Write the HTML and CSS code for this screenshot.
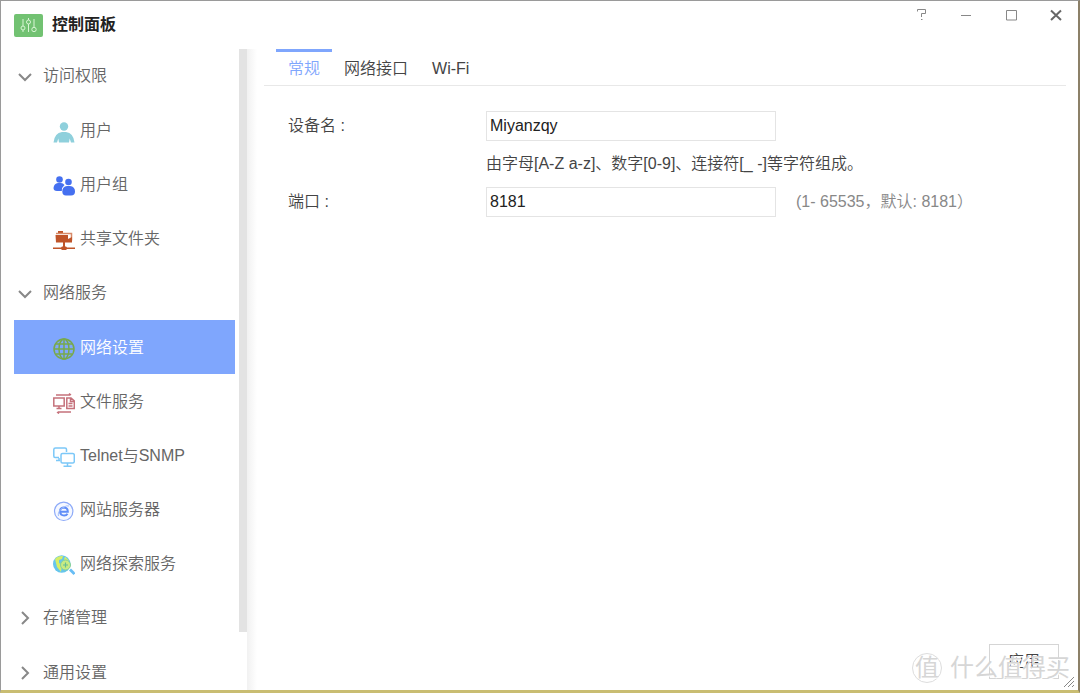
FILE: index.html
```html
<!DOCTYPE html>
<html lang="zh-CN">
<head>
<meta charset="utf-8">
<meta name="viewport" content="width=device-width, initial-scale=1">
<title>控制面板</title>
<link rel="stylesheet" href="styles.css">
</head>
<body>
<div class="window">
  <header class="titlebar">
    <svg class="app-icon" viewBox="0 0 29 23" aria-hidden="true"><rect width="29" height="23" rx="2" fill="#72c272"/><g fill="none" stroke="#d8f5d4"><path d="M9 5v7M9 16v2M14.500 4v2M14.500 10v8M20 5v8"/><circle cx="9" cy="14" r="2"/><circle cx="14.500" cy="8" r="2"/><circle cx="20" cy="15.500" r="2.200"/></g></svg>
    <h1 class="title">控制面板</h1>
    <div class="window-controls">
      <button class="control" type="button" aria-label="帮助"><svg viewBox="0 0 14 14"><path d="M3.500 3.500v-2h8v4H7.500V9M7 11.500h1.500" /></svg></button>
      <button class="control" type="button" aria-label="最小化"><svg viewBox="0 0 14 14"><path d="M2 7.500h10"/></svg></button>
      <button class="control" type="button" aria-label="最大化"><svg viewBox="0 0 14 14"><path d="M2.500 2.500h10v9.500h-10z"/></svg></button>
      <button class="control close" type="button" aria-label="关闭"><svg viewBox="0 0 14 14"><path d="M2 2.500l10 9.500M12 2.500L2 12"/></svg></button>
    </div>
  </header>

  <div class="body">
    <aside class="sidebar">
      <nav class="menu">
        <section class="group">
          <button class="group-name" type="button"><svg class="chevron" viewBox="0 0 16 16"><path d="M2 6l6 6 6-6"/></svg>访问权限</button>
          <a class="item" href="#users"><svg class="icon" viewBox="0 0 22 22"><g fill="#8fd0dc"><circle cx="11" cy="5.500" r="4.200"/><path d="M0.500 21.500Q1.500 12 9 11h4q7.500 1 8.500 10.500h-3.500l-1.300-4-.7 4H6l-.7-4-1.300 4z"/></g></svg>用户</a>
          <a class="item" href="#groups"><svg class="icon" viewBox="0 0 22 22"><g fill="#4570f0"><circle cx="6.500" cy="4.500" r="3.300"/><path d="M0.500 13Q1 8.500 5 8h3q2 0 3.500 2-2.700 2-2.700 6H4q-3.500 0-3.500-3z"/><circle cx="15.500" cy="7" r="3.300"/><path d="M9.300 16.500q0-5 4.700-5.500h3q5 .5 5 5.500 0 4-4 4h-5q-3.700 0-3.700-4z"/></g></svg>用户组</a>
          <a class="item" href="#shares"><svg class="icon" viewBox="0 0 22 22"><path d="M5 2h5v2H5z" fill="#bf5429"/><path d="M3 4.500h15.500v7" fill="none" stroke="#d88a69" stroke-width="1.500"/><path d="M2.500 6H15v4l2-1 2-1v5.500H3zM10 13h2v5h-2zM0 18.500h8l1-1h4l1 1h8V20h-8l-1 1H9l-1-1H0z" fill="#bf5429"/></svg>共享文件夹</a>
        </section>
        <section class="group">
          <button class="group-name" type="button"><svg class="chevron" viewBox="0 0 16 16"><path d="M2 6l6 6 6-6"/></svg>网络服务</button>
          <a class="item active" href="#network" aria-current="page"><svg class="icon" viewBox="0 0 22 22"><g fill="none" stroke="#78a94c" stroke-width="1.500"><circle cx="11" cy="11" r="10"/><ellipse cx="11" cy="11" rx="5" ry="10"/><path d="M11 1v20M1 11h20M3 6h16M3 16h16"/></g></svg>网络设置</a>
          <a class="item" href="#files"><svg class="icon" viewBox="0 0 22 22"><g fill="none" stroke="#c5717b" stroke-width="1.500"><path d="M3 3h14M16 1.500l2 1.500M.800 6h10.400v8H.800zM6 14v2.500M3.500 16.500h5M13.800 6H18l3.300 3v7.500h-7.500zM17.500 6v3.500h3.500M15.500 11.500h4M15.500 14h4M5 20h13M6 21.500L4 20"/></g></svg>文件服务</a>
          <a class="item" href="#telnet"><svg class="icon" viewBox="0 0 22 22"><g fill="none" stroke="#7cc8f8" stroke-width="1.500"><path d="M6 11.500H2Q.800 11.500.800 10V3.500Q.800 2 2.500 2h9.500Q13.500 2 13.500 3.500V6M3 14.500h4M6 12v2"/><rect x="8" y="7.500" width="13.300" height="9.500" rx="1.500"/><path d="M14.500 17v3M10.500 20.300h8"/></g></svg>Telnet与SNMP</a>
          <a class="item" href="#web"><svg class="icon" viewBox="0 0 22 22"><circle cx="10.700" cy="11.300" r="9.200" fill="#f5f8ff" stroke="#8daaf8" stroke-width="1.200"/><path d="M7 11.700h7.800Q14.700 7.500 11 7.500q-4 .2-4 4 .3 4 4.200 4 2.300 0 3.300-1.700" fill="none" stroke="#5f8df7" stroke-width="2"/><path d="M5.500 16Q4 12 10 7.500q4-2.500 6-1.500" fill="none" stroke="#a5bffb"/></svg>网站服务器</a>
          <a class="item" href="#discovery"><svg class="icon" viewBox="0 0 22 22"><circle cx="8.700" cy="10" r="8.700" fill="#65c5ed"/><path d="M2 5Q5 1.500 10 2l-1 3-3 1v3l3 2-1 7-4-5zM12 2.500l4 4-3 2-2-3z" fill="#d5ee68"/><circle cx="12.500" cy="11" r="5" fill="#c8eb82" stroke="#83cf9d"/><path d="M10 11h5M12.500 8.500v5" stroke="#65bd94" stroke-width="1.200"/><path d="M17 15.500l4.500 4.500" stroke="#68bdf5" stroke-width="2.800"/></svg>网络探索服务</a>
        </section>
        <section class="group">
          <button class="group-name" type="button"><svg class="chevron" viewBox="0 0 16 16"><path d="M5 2l6 6-6 6"/></svg>存储管理</button>
        </section>
        <section class="group">
          <button class="group-name" type="button"><svg class="chevron" viewBox="0 0 16 16"><path d="M5 2l6 6-6 6"/></svg>通用设置</button>
        </section>
      </nav>
      <div class="scroll-track"><div class="scroll-thumb"></div></div>
    </aside>

    <main class="content">
      <div class="tabs" role="tablist">
        <button class="tab selected" role="tab" aria-selected="true" type="button">常规</button>
        <button class="tab" role="tab" aria-selected="false" type="button">网络接口</button>
        <button class="tab" role="tab" aria-selected="false" type="button">Wi-Fi</button>
      </div>
      <form class="form">
        <label class="label" for="device">设备名 :</label>
        <input class="input" id="device" type="text" value="Miyanzqy">
        <p class="hint">由字母[A-Z a-z]、数字[0-9]、连接符[_ -]等字符组成。</p>
        <label class="label" for="port">端口 :</label>
        <input class="input" id="port" type="text" value="8181">
        <span class="note">(1- 65535，默认: 8181）</span>
      </form>
      <footer class="actions">
        <button class="apply" type="button">应用</button>
      </footer>
    </main>
  </div>
  <div class="watermark"><span class="seal">值</span><span>什么值得买</span></div>
  <svg class="grip" viewBox="0 0 12 12" aria-hidden="true"><path d="M1 11L11 1M5 11l6-6M9 11l2-2"/></svg>
</div>
</body>
</html>
```

FILE: styles.css
```css
* {
  box-sizing: border-box;
}

body {
  margin: 0;
  color: #444;
  background: #fff;
  font-family: "Liberation Sans", "Noto Sans CJK SC", sans-serif;
  font-size: 16px;
  font-weight: 350;
  line-height: 24px;
}

button,
input {
  margin: 0;
  padding: 0;
  border: 0;
  background: none;
  color: inherit;
  font: inherit;
}

.window {
  position: relative;
  display: flex;
  flex-direction: column;
  height: 100vh;
  overflow: hidden;
  border-style: solid;
  border-width: 1px 2px 3px 1px;
  border-color: #9a9a9a #8c8068 #c9bd72 #9a9a9a;
}

.titlebar {
  display: flex;
  flex: none;
  align-items: center;
  height: 48px;
  padding-left: 13px;
}

.app-icon {
  width: 29px;
  height: 23px;
}

.title {
  flex: 1;
  margin: 0 0 0 9px;
  color: #222;
  font-size: 16px;
  font-weight: 700;
}

.window-controls {
  display: flex;
  align-self: flex-start;
}

.control {
  display: grid;
  place-items: center;
  width: 45px;
  height: 28px;
}

.control svg {
  width: 14px;
  height: 14px;
  fill: none;
  stroke: #888;
}

.control.close svg {
  stroke: #666;
  stroke-width: 2;
}

.body {
  display: flex;
  flex: 1;
  min-height: 0;
}

.sidebar {
  display: flex;
  flex: none;
  width: 246px;
  overflow: hidden;
}

.menu {
  display: flex;
  flex: 1;
  flex-direction: column;
  gap: 1px;
  padding: 0 4px 0 13px;
}

.group-name,
.item {
  display: flex;
  align-items: center;
  width: 100%;
  height: 54px;
  color: #666;
  text-decoration: none;
}

.group-name {
  gap: 10px;
  padding-left: 3px;
}

.chevron {
  width: 16px;
  height: 16px;
  fill: none;
  stroke: #888;
  stroke-width: 2;
}

.item {
  gap: 5px;
  padding: 2px 0 0 39px;
}

.icon {
  width: 22px;
  height: 22px;
  margin-top: 2px;
}

.item.active {
  background: #7fa6fd;
  color: #fff;
}

.scroll-track {
  width: 8px;
}

.scroll-thumb {
  height: 91%;
  background: #e3e3e3;
}

.content {
  display: flex;
  flex: 1;
  flex-direction: column;
  min-width: 0;
  padding: 0 12px 11px 17px;
  background: linear-gradient(90deg, #f1f1f1, #fff 10px);
}

.tabs {
  display: flex;
  flex: none;
  height: 37px;
  padding-left: 12px;
  border-bottom: 1px solid #e8e8e8;
}

.tab {
  padding: 0 12px;
  border-top: 3px solid transparent;
}

.tab.selected {
  border-top-color: #7fa6fd;
  color: #7fa6fd;
}

.form {
  display: grid;
  grid-template-columns: 198px 290px 1fr;
  align-items: center;
  padding: 25px 0 0 24px;
}

.input {
  height: 30px;
  padding: 0 3px;
  border: 1px solid #e4e4e4;
  background: #fff;
  color: #222;
}

.hint {
  grid-column: 2 / -1;
  margin: 11px 0;
}

.note {
  padding-left: 20px;
  color: #888;
}

.actions {
  display: flex;
  justify-content: flex-end;
  margin-top: auto;
  padding-right: 7px;
}

.apply {
  width: 70px;
  height: 35px;
  border: 1px solid #d5d5d5;
}

.watermark {
  position: absolute;
  right: 8px;
  bottom: 6px;
  display: flex;
  align-items: center;
  gap: 8px;
  color: #d6d6d6;
  font-size: 24px;
  font-weight: 400;
  line-height: 32px;
  pointer-events: none;
  text-shadow: 1px 1px #fff;
}

.seal {
  width: 30px;
  height: 30px;
  border: 1px solid #ddd;
  border-radius: 50%;
  line-height: 28px;
  text-align: center;
}

.grip {
  position: absolute;
  right: 3px;
  bottom: 2px;
  width: 12px;
  height: 12px;
  fill: none;
  stroke: #888;
}
```
